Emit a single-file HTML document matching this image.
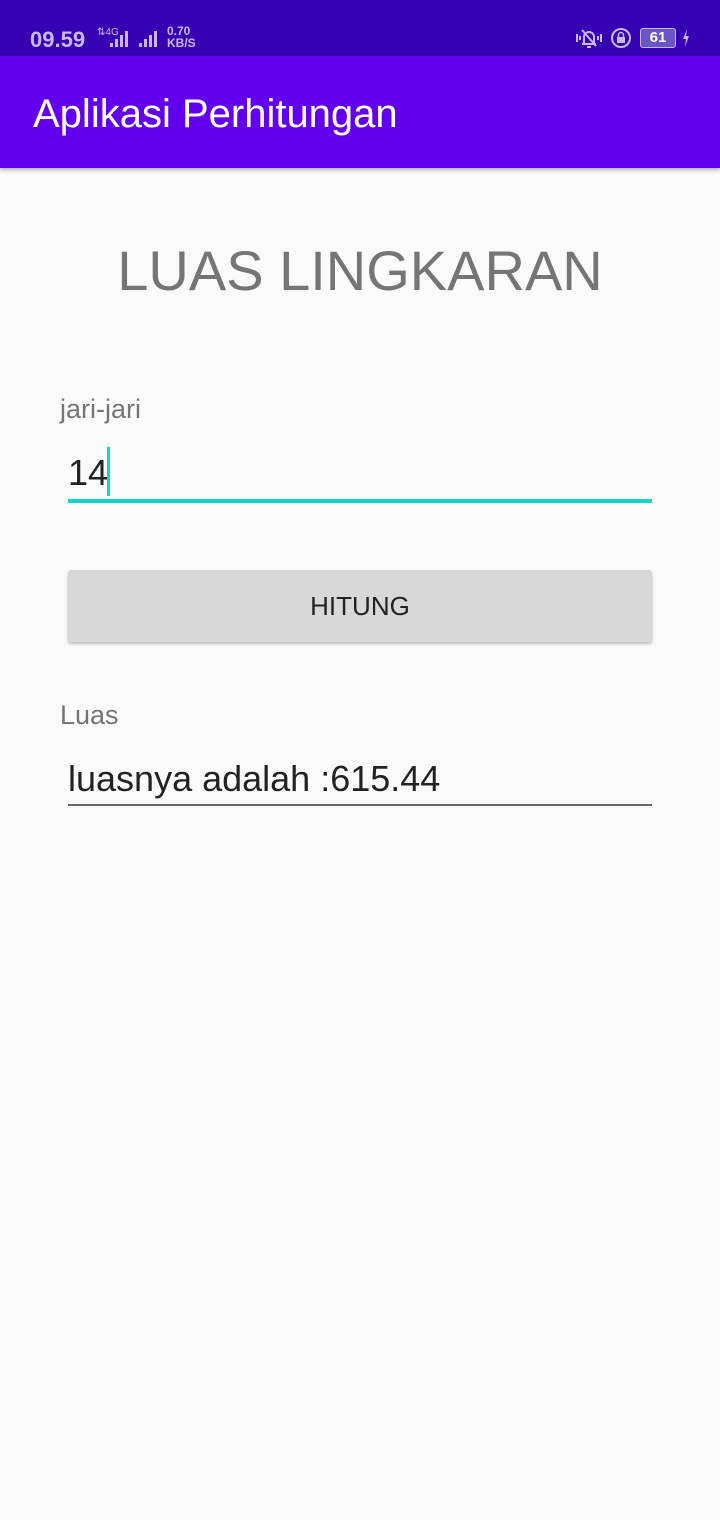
<!DOCTYPE html>
<html><head><meta charset="utf-8"><style>
body{margin:0;width:720px;height:1520px;background:#fafafa;font-family:"Liberation Sans",sans-serif;position:relative;overflow:hidden}
.sb{position:absolute;top:0;left:0;width:720px;height:56px;background:#3700b3;color:#c9b8f0}
.tb{position:absolute;top:56px;left:0;width:720px;height:112px;background:#6200ee;box-shadow:0 2px 4px rgba(0,0,0,.3)}
.t{position:absolute;white-space:nowrap}
</style></head><body>
<div class="sb">
<div class="t" style="left:30px;top:27px;font-size:22px;font-weight:bold">09.59</div>
<div class="t" style="left:97px;top:27px;font-size:10px">⇅4G</div>
<svg style="position:absolute;left:110px;top:30px" width="54" height="18"><rect x="0" y="13" width="3" height="4" fill="#c9b8f0"/><rect x="5" y="9" width="3" height="8" fill="#c9b8f0"/><rect x="10" y="5" width="3" height="12" fill="#c9b8f0"/><rect x="15" y="1" width="3" height="16" fill="#c9b8f0"/><rect x="29" y="13" width="3" height="4" fill="#c9b8f0"/><rect x="34" y="9" width="3" height="8" fill="#c9b8f0"/><rect x="39" y="5" width="3" height="12" fill="#c9b8f0"/><rect x="44" y="1" width="3" height="16" fill="#c9b8f0"/></svg>
<div class="t" style="left:167px;top:25px;font-size:12px;line-height:12px;font-weight:bold">0.70<br>KB/S</div>
<svg style="position:absolute;left:574px;top:26px" width="30" height="24" fill="none" stroke="#c9b8f0" stroke-width="2"><path d="M10 18 V11 a5 5 0 0 1 10 0 V18 Z M8 18 H22 M13 21 H17 M8 4 L22 20 M3 8 V16 M6 10 V14 M27 8 V16 M24 10 V14"/></svg>
<svg style="position:absolute;left:610px;top:27px" width="22" height="22"><circle cx="11" cy="11" r="9" fill="none" stroke="#c9b8f0" stroke-width="2"/><rect x="7" y="10" width="8" height="6" fill="#c9b8f0"/><path d="M8.5 10 V8 a2.5 2.5 0 0 1 5 0 V10" fill="none" stroke="#c9b8f0" stroke-width="1.5"/></svg>
<div style="position:absolute;left:640px;top:28px;width:34px;height:18px;border:1.5px solid #c9b8f0;border-radius:3px;background:#6a55c8;color:#fff;font-size:15px;font-weight:bold;text-align:center;line-height:18px">61</div>
<svg style="position:absolute;left:681px;top:28px" width="10" height="20"><path d="M6 1 L2 11 H5 L4 19 L8 8 H5 Z" fill="#c9b8f0"/></svg>
</div>
<div class="tb"><div class="t" style="left:33px;top:36px;font-size:40px;color:#fff">Aplikasi Perhitungan</div></div>
<div class="t" style="left:0;width:720px;text-align:center;top:238px;font-size:56px;color:#757575">LUAS LINGKARAN</div>
<div class="t" style="left:60px;top:394px;font-size:27px;color:#757575">jari-jari</div>
<div class="t" style="left:68px;top:452px;font-size:36px;color:#222">14</div>
<div style="position:absolute;left:107px;top:447px;width:3px;height:49px;background:#10d6c4"></div>
<div style="position:absolute;left:68px;top:499px;width:584px;height:4px;background:#10d6c4"></div>
<div style="position:absolute;left:68px;top:570px;width:584px;height:72px;background:#d7d8d8;border-radius:3px;box-shadow:0 2px 3px rgba(0,0,0,.25);text-align:center;line-height:72px;font-size:26px;color:#222">HITUNG</div>
<div class="t" style="left:60px;top:700px;font-size:27px;color:#757575">Luas</div>
<div class="t" style="left:68px;top:758px;font-size:36px;color:#222">luasnya adalah :615.44</div>
<div style="position:absolute;left:68px;top:804px;width:584px;height:2px;background:#666"></div>
</body></html>
